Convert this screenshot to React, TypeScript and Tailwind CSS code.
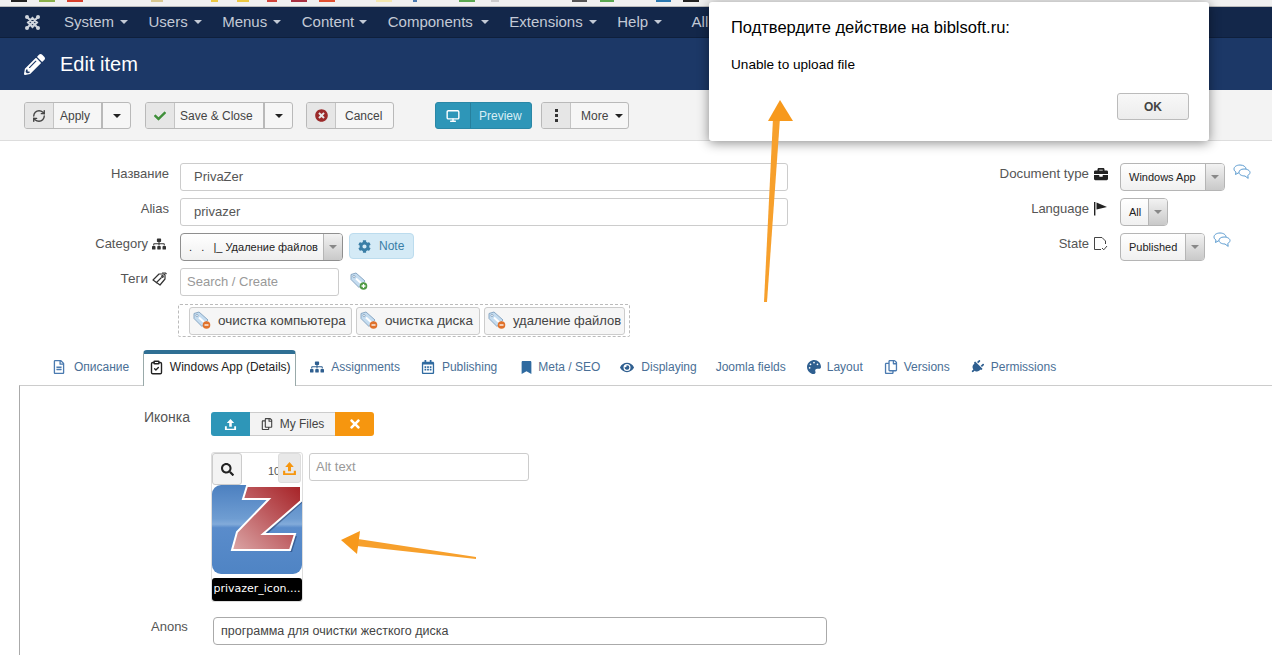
import React from "react";
import { RefreshCw, Monitor, ClipboardCheck } from "lucide-react";
import {
  FaCheck, FaTimesCircle, FaPencilAlt, FaBriefcase, FaSitemap, FaCog, FaRegFileAlt, FaRegCalendarAlt, FaBookmark, FaEye,
  FaPalette, FaRegCopy, FaPlug, FaTimes, FaSearch,
} from "react-icons/fa";

const Nav = ({ t, gap = 6 }: { t: string; gap?: number }) => (
  <span className="flex items-center text-[15px] text-[#c3cad6]" style={{ gap }}>
    {t}
    <span className="w-0 h-0 border-x-[4px] border-x-transparent border-t-[4px] border-t-[#c3cad6]" />
  </span>
);

const Caret = ({ c = "#222" }: { c?: string }) => (
  <span className="w-0 h-0 border-x-[4px] border-x-transparent border-t-[4px]" style={{ borderTopColor: c }} />
);

const UploadIcon = ({ c, s = 14 }: { c: string; s?: number }) => (
  <svg width={s} height={s} viewBox="0 0 14 14" fill={c}>
    <path d="M7 1 11 5.500H8.400V9.500H5.600V5.500H3z" />
    <path d="M1 9h2v2.500h8V9h2v4H1z" />
  </svg>
);

const TagIcon = ({ plus }: { plus?: boolean }) => (
  <svg width="19" height="19" viewBox="0 0 19 19" className="shrink-0">
    <path d="M1 2.500 6 1l9 8-6 6.500-8-8z" fill="#c4dcf0" stroke="#8aa8c4" />
    <path d="M6 6.500 12 12" stroke="#fff" strokeWidth="2" />
    <circle cx="4" cy="4.500" r="1.100" fill="#fff" stroke="#6d8aa6" strokeWidth=".6" />
    <circle cx="13.500" cy="14" r="3.800" fill={plus ? "#4f9a45" : "#e0722c"} />
    <path d={plus ? "M11.500 14h4M13.500 12v4" : "M11.500 14h4"} stroke="#fff" strokeWidth="1.300" />
  </svg>
);

const TagsOutline = () => (
  <svg width="15" height="14" viewBox="0 0 15 14" fill="none" stroke="#333" strokeWidth="1.200">
    <path d="M1 8 7 2h5l1 1v4l-5 6z" strokeLinejoin="round" />
    <path d="M4 11 9.500 5.500M10 1h3.500L14.500 2" />
    <circle cx="10.500" cy="4.500" r=".8" />
  </svg>
);

const FlagIcon = () => (
  <svg width="15" height="15" viewBox="0 0 15 15" fill="#222">
    <rect x="1" y="1" width="1.400" height="13.500" />
    <path d="M3.500 1.500 14 6 3.500 8.500z" />
  </svg>
);

const DocCheck = () => (
  <svg width="15" height="15" viewBox="0 0 15 15" fill="none" stroke="#444" strokeWidth="1">
    <path d="M8 13.500H1.500v-12h7.500l3.500 3.500v3" />
    <path d="m9 12 1.800 1.800L14 10" />
  </svg>
);

const Chip = ({ t, w, fs = 13.5 }: { t: string; w: number; fs?: number }) => (
  <span style={{ width: w, fontSize: fs }} className="h-[28px] shrink-0 flex items-center gap-[6px] pl-[3px] pb-[1px] border border-[#ccc] rounded-[3px] bg-[#f6f6f6] text-[#444] whitespace-nowrap">
    <TagIcon />
    <span className="pt-[2px]">{t}</span>
  </span>
);

const Select = ({ t, w, dark, h = 28 }: { t: string; w: number; dark?: boolean; h?: number }) => (
  <span style={{ width: w, height: h }} className={`flex border ${dark ? "border-[#8f8f8f]" : "border-[#b5b5b5]"} rounded-[4px] bg-gradient-to-b from-white to-[#f0f0f0] text-[11px] text-[#222] overflow-hidden`}>
    <span className="flex-1 flex items-center pl-[8px] whitespace-pre">{t}</span>
    <span className="w-[19px] flex items-center justify-center border-l border-[#b5b5b5] bg-gradient-to-b from-[#f2f2f2] to-[#c9c9c9]">
      <Caret c="#888" />
    </span>
  </span>
);

const Chat = () => (
  <svg width="18" height="16" viewBox="0 0 18 16" fill="#fff" stroke="#5b9bd0" strokeWidth="1">
    <path d="M7 1C3.500 1 1 2.800 1 5c0 1.300.8 2.400 2 3l-.5 2.500L5.500 8.800c.5.100 1 .2 1.500.2 3.500 0 6-1.800 6-4S10.500 1 7 1z" />
    <path d="M11 5c3.300 0 6 1.500 6 3.500 0 1.200-.9 2.200-2.200 2.900l.4 3L12 12c-3.300 0-6-1.500-6-3.500S7.700 5 11 5z" />
  </svg>
);

const TabItem = ({ icon, t, gap = 7, c = "#4a6f96" }: { icon?: React.ReactNode; t: string; gap?: number; c?: string }) => (
  <span className="flex items-center text-[12px] text-[#4a6f96] h-[36px]" style={{ gap }}>
    {icon && <span className="w-[14px] flex justify-center" style={{ color: c }}>{icon}</span>}
    {t}
  </span>
);

const TB = ({ icon, t, caret, pl, tw }: { icon: React.ReactNode; t: string; caret?: boolean; pl: number; tw: number }) => (
  <span className="flex h-[27px] border border-[#b9b9b9] rounded-[3px] bg-[#f6f6f6] text-[12px] text-[#444] overflow-hidden">
    <span className="w-[29px] flex items-center justify-center bg-[#e6e6e6] border-r border-[#c4c4c4]">{icon}</span>
    <span style={{ width: tw, paddingLeft: pl }} className="flex items-center">{t}</span>
    {caret && (
      <span className="w-[29px] flex items-center justify-center border-l-2 border-[#b9b9b9]">
        <Caret />
      </span>
    )}
  </span>
);

const favs = [
  [11, 16, "#222"], [39, 16, "#8ab04a"], [67, 16, "#d8402c"], [151, 12, "#d8c890"], [211, 7, "#ecc840"], [237, 12, "#ecc840"], [267, 10, "#d0443a"], [291, 16, "#a83040"], [319, 16, "#e05030"],
  [376, 16, "#f4e8b0"], [413, 4, "#4a7ab0"], [459, 16, "#5aa850"], [491, 8, "#ccc"], [572, 15, "#555"], [600, 14, "#5aa850"], [656, 15, "#2a78b0"], [683, 16, "#222"],
] as [number, number, string][];

export default function App() {
  return (
    <div className="relative w-[1272px] h-[655px] overflow-hidden bg-white font-['Liberation_Sans','Noto_Sans',sans-serif] text-[#555]">
      {/* browser bookmarks strip */}
      <div className="h-[7px] bg-[#f0f0f0] border-b border-[#bbb] flex overflow-hidden">
        {favs.map(([x, w, c], i) => (
          <span key={i} className="absolute top-0 h-[2px]" style={{ left: x, width: w, background: c }} />
        ))}
      </div>

      <div className="h-[31px] bg-[#13274a] flex items-center pl-[24px] border-b border-[#0e1f3c]">
        <svg width="17" height="17" viewBox="0 0 17 17" className="mr-[23px]" fill="none" stroke="#cfd4dc" strokeWidth="2">
          <path d="M3 3l11 11M14 3 3 14M4 8.500 8.500 4 13 8.500 8.500 13z" />
          <circle cx="3" cy="3" r="2" fill="#cfd4dc" stroke="none" />
          <circle cx="14" cy="3" r="2" fill="#cfd4dc" stroke="none" />
          <circle cx="3" cy="14" r="2" fill="#cfd4dc" stroke="none" />
          <circle cx="14" cy="14" r="2" fill="#cfd4dc" stroke="none" />
        </svg>
        <div className="flex gap-[20.500px]">
          <Nav t="System" />
          <Nav t="Users" />
          <Nav t="Menus" />
          <Nav t="Content" gap={5} />
          <Nav t="Components" gap={8} />
          <Nav t="Extensions" />
          <Nav t="Help" />
          <span className="text-[15px] text-[#c3cad6] ml-[9px]">All</span>
        </div>
      </div>

      <div className="h-[52px] bg-[#1c3867] flex items-center pl-[24px] gap-[15px] text-white">
        <FaPencilAlt size={21} />
        <span className="text-[20px]">Edit item</span>
      </div>

      <div className="h-[51px] bg-[#f3f3f3] border-b border-[#ddd] flex items-center pl-[24px] pt-[1px]">
        <TB icon={<RefreshCw size={14} strokeWidth={2.400} className="text-[#444]" />} t="Apply" pl={6} tw={47} caret />
        <span className="w-[14px]" />
        <TB icon={<FaCheck size={12} className="text-[#3f8f3a]" />} t="Save & Close" pl={5} tw={88} caret />
        <span className="w-[13px]" />
        <TB icon={<FaTimesCircle size={13} className="text-[#9b2a2a]" />} t="Cancel" pl={9} tw={57} />
        <span className="w-[41px]" />
        <span className="flex h-[27px] w-[97px] rounded-[3px] bg-[#2e96b8] border border-[#2a87a6] text-[12px] text-[#d8eef5] overflow-hidden">
          <span className="w-[35px] flex items-center justify-center border-r border-[#277f9c]"><Monitor size={14} strokeWidth={2.400} className="text-white" /></span>
          <span className="flex-1 flex items-center pl-[8px]">Preview</span>
        </span>
        <span className="w-[9px]" />
        <span className="flex h-[27px] w-[88px] border border-[#b9b9b9] rounded-[3px] bg-[#f6f6f6] text-[12px] text-[#444] overflow-hidden">
          <span className="w-[29px] flex flex-col gap-[2px] items-center justify-center bg-[#e6e6e6] border-r border-[#c4c4c4]">
            <span className="w-[3px] h-[3px] bg-[#333]" /><span className="w-[3px] h-[3px] bg-[#333]" /><span className="w-[3px] h-[3px] bg-[#333]" />
          </span>
          <span className="flex-1 flex items-center pl-[10px] gap-[7px]">More <Caret /></span>
        </span>
      </div>

      {/* form */}
      <div className="flex h-[214px]">
        <div className="w-[900px] pt-[22px] flex flex-col">
          <div className="flex items-start h-[35px]">
            <span className="w-[169px] text-right text-[13px] pt-[1px]">Название</span>
            <span className="ml-[11px] w-[608px] h-[28px] border border-[#ccc] rounded-[3px] flex items-center pl-[13px] text-[13px] text-[#555]">PrivaZer</span>
          </div>
          <div className="flex items-start h-[35px]">
            <span className="w-[169px] text-right text-[13px] pt-[1px]">Alias</span>
            <span className="ml-[11px] w-[608px] h-[28px] border border-[#ccc] rounded-[3px] flex items-center pl-[13px] text-[13px] text-[#555]">privazer</span>
          </div>
          <div className="flex items-start h-[35px]">
            <span className="w-[169px] text-[13px] pt-[1px] pr-[3px] flex justify-end items-center gap-[4px]">Category <FaSitemap size={14} className="text-[#333]" /></span>
            <span className="ml-[11px]"><Select t=".   .   |_ Удаление файлов" w={163} dark /></span>
            <span className="ml-[6px] w-[65px] h-[26px] rounded-[4px] bg-[#d4eaf6] border border-[#bcdcee] text-[12px] text-[#3a7ea6] flex items-center pl-[8px] gap-[8px]">
              <FaCog size={13} /> Note
            </span>
          </div>
          <div className="flex items-start h-[35px]">
            <span className="w-[170px] text-[13.500px] pt-[1px] pr-[3px] flex justify-end items-center gap-[4px]">Теги <TagsOutline /></span>
            <span className="ml-[10px] w-[159px] h-[28px] border border-[#ccc] rounded-[3px] flex items-center pl-[6px] text-[13px] text-[#999]">Search / Create</span>
            <span className="ml-[11px] mt-[4px]"><TagIcon plus /></span>
          </div>
          <div className="ml-[178px] mt-[1px] w-[452px] h-[33px] border border-dashed border-[#bbb] rounded-[2px] flex items-center pl-[10px] gap-[4px]">
            <Chip t="очистка компьютера" w={163} />
            <Chip t="очистка диска" w={124} />
            <Chip t="удаление файлов" w={141} fs={13} />
          </div>
        </div>
        <div className="flex-1 pt-[22px] flex flex-col">
          <div className="flex items-start h-[35px]">
            <span className="w-[220px] pr-[12px] pt-[1px] text-[13.300px] flex justify-end items-center gap-[5px]">Document type <FaBriefcase size={14} className="text-[#222]" /></span>
            <Select t="Windows App" w={105} />
            <span className="ml-[8px] mt-[1px]"><Chat /></span>
          </div>
          <div className="flex items-start h-[35px]">
            <span className="w-[220px] pr-[12px] pt-[1px] text-[13px] flex justify-end items-center gap-[4px]">Language <FlagIcon /></span>
            <Select t="All" w={48} />
          </div>
          <div className="flex items-start h-[35px]">
            <span className="w-[220px] pr-[12px] pt-[1px] text-[13px] flex justify-end items-center gap-[4px]">State <DocCheck /></span>
            <Select t="Published" w={85} />
            <span className="ml-[8px] -mt-[1px]"><Chat /></span>
          </div>
        </div>
      </div>

      {/* tabs */}
      <div className="h-[35px] flex items-end pl-[52px] -mt-[5px]">
        <TabItem icon={<FaRegFileAlt size={14} />} t="Описание" gap={8} c="#4a7ab0" />
        <span className="relative z-10 ml-[14px] h-[36px] w-[153px] -mb-[1px] bg-white border-x border-[#9aa] border-t-[4px] border-t-[#2f6f94] rounded-t-[4px] flex items-center justify-center gap-[6px] text-[12px] text-[#222] pb-[6px]">
          <ClipboardCheck size={15} strokeWidth={2.200} /> Windows App (Details)
        </span>
        <span className="ml-[14px]" />
        <TabItem icon={<FaSitemap size={14} />} t="Assignments" c="#2f5f90" />
        <span className="ml-[21px]" />
        <TabItem icon={<FaRegCalendarAlt size={14} />} t="Publishing" c="#2f6aa0" />
        <span className="ml-[22px]" />
        <TabItem icon={<FaBookmark size={13} />} t="Meta / SEO" gap={5} c="#2f6aa0" />
        <span className="ml-[20px]" />
        <TabItem icon={<FaEye size={15} />} t="Displaying" c="#2f5f90" />
        <span className="ml-[19px]" />
        <TabItem t="Joomla fields" />
        <span className="ml-[21px]" />
        <TabItem icon={<FaPalette size={14} />} t="Layout" gap={6} c="#2f5f90" />
        <span className="ml-[21px]" />
        <TabItem icon={<FaRegCopy size={14} />} t="Versions" gap={6} c="#4a7ab0" />
        <span className="ml-[20px]" />
        <TabItem icon={<span className="block rotate-45"><FaPlug size={14} /></span>} t="Permissions" c="#2f5f90" />
      </div>

      {/* content */}
      <div className="ml-[19px] border-l border-t border-l-[#aaa] border-t-[#ccc] h-[270px] pt-[26px] flex flex-col">
        <div className="flex h-[37px]">
          <span className="w-[170px] text-right text-[14px] -mt-[5px]">Иконка</span>
          <span className="ml-[21px] flex h-[24px] rounded-[3px] overflow-hidden text-[12px] text-[#444]">
            <span className="w-[39px] bg-[#2e96b8] flex items-center justify-center"><UploadIcon c="#fff" s={13} /></span>
            <span className="w-[85px] bg-[#f3f3f3] border-y border-[#ccc] flex items-center justify-center gap-[7px]"><FaRegCopy size={12} /> My Files</span>
            <span className="w-[39px] bg-[#f6960f] flex items-center justify-center"><FaTimes size={14} className="text-white" /></span>
          </span>
        </div>
      </div>

      {/* image widget */}
      <div className="absolute left-[211px] top-[452px] w-[92px] h-[150px] border border-[#ddd] rounded-[3px] bg-white flex flex-col items-center">
        <div className="w-full h-[33px] flex relative">
          <span className="absolute left-0 top-0 w-[30px] h-[32px] border border-[#ccc] rounded-[3px] bg-[#f3f3f3] flex items-center justify-center"><FaSearch size={13} className="text-[#222]" /></span>
          <span className="absolute left-[56px] top-[10px] text-[11px]">10</span>
          <span className="absolute left-[66px] top-0 w-[23px] h-[30px] rounded-[3px] bg-[#e8e8e8] border border-[#ddd] flex items-center justify-center"><UploadIcon c="#f6960f" s={15} /></span>
        </div>
        <svg width="90" height="90" viewBox="0 0 90 90" className="shrink-0">
          <defs>
            <linearGradient id="z" x1="0" y1="1" x2="1" y2="0"><stop offset="0" stopColor="#dba6a6" /><stop offset=".55" stopColor="#bd5a5e" /><stop offset="1" stopColor="#a62226" /></linearGradient>
            <linearGradient id="bg" x1="0" y1="0" x2="0" y2="1">
              <stop offset="0" stopColor="#4c80c0" /><stop offset=".38" stopColor="#6f9dd2" /><stop offset=".44" stopColor="#82abda" />
              <stop offset=".48" stopColor="#5a8ccb" /><stop offset="1" stopColor="#4f84c4" />
            </linearGradient>
          </defs>
          <rect width="90" height="89" rx="9" fill="url(#bg)" />
          <path d="M91 2V17L53 51H85L80 67H78L83 50H50L89 16V2z" fill="#24406e" opacity=".55" />
          <path d="M35 1H89V16L51 49H83L78 65H20L25 47L57 14H31Z" fill="url(#z)" stroke="#fff" strokeWidth="2" />
        </svg>
        <span className="w-[90px] h-[23px] mt-[3px] bg-black rounded-[3px] text-white text-[11px] font-['DejaVu_Sans',sans-serif] flex items-center justify-center whitespace-nowrap overflow-hidden">privazer_icon....</span>
      </div>

      <div className="absolute left-[309px] top-[453px] w-[220px] h-[28px] border border-[#ccc] rounded-[3px] flex items-center pl-[6px] text-[13px] text-[#999]">Alt text</div>

      <div className="absolute left-[151px] top-[617px] text-[13px]">Anons</div>
      <div className="absolute left-[213px] top-[617px] w-[614px] h-[28px] border border-[#aaa] rounded-[4px] flex items-center pl-[7px] text-[12.500px] text-[#444]">программа для очистки жесткого диска</div>

      {/* alert dialog */}
      <div className="absolute left-[709px] top-[2px] w-[500px] h-[139px] bg-white rounded-[3px] shadow-[0_2px_12px_rgba(0,0,0,0.45)] text-black">
        <div className="absolute left-[22px] top-[13px] text-[16.500px]">Подтвердите действие на biblsoft.ru:</div>
        <div className="absolute left-[22px] top-[53px] text-[13.600px]">Unable to upload file</div>
        <div className="absolute left-[408px] top-[91px] w-[72px] h-[27px] border border-[#bbb] rounded-[3px] bg-gradient-to-b from-[#f8f8f8] to-[#ececec] flex items-center justify-center text-[12px] font-bold text-[#444]">OK</div>
      </div>

      {/* annotation arrows */}
      <svg className="absolute left-0 top-0 pointer-events-none" width="1272" height="655">
        <path d="M764 302 767 302 780 118 773 118z" fill="#f7a02c" />
        <path d="M780 100 768 121 793 121z" fill="#f7991c" />
        <path d="M476 559 476 557 358 539 357 546z" fill="#f7a02c" />
        <path d="M341 540 360 531 357 554z" fill="#f7991c" />
      </svg>
    </div>
  );
}
